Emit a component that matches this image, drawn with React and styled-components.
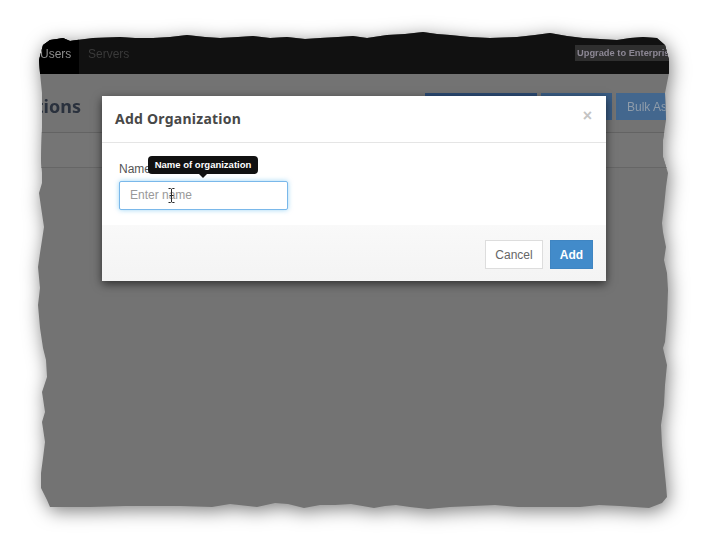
import styled, { createGlobalStyle } from "styled-components";

const GlobalStyle = createGlobalStyle`
    html, body {
        margin: 0;
        padding: 0;
        background: #ffffff;
    }
`;

// torn paper outline, traced clockwise in page coordinates
const tornEdge = [
    [43, 45], [50, 40], [57, 39], [63, 38], [70, 41], [77, 40], [85, 39], [93, 38], [120, 37], [135, 38], [153, 38],
    [170, 37], [187, 35], [205, 37], [220, 38], [238, 37], [253, 36], [270, 38], [287, 37], [305, 39], [320, 38],
    [338, 37], [353, 36], [367, 38], [387, 35], [405, 34], [423, 32], [437, 34], [450, 35], [470, 37], [490, 38],
    [517, 37], [535, 35], [550, 33], [567, 36], [583, 38], [600, 39], [617, 40], [630, 38], [643, 37], [657, 38],
    [665, 45], [669, 60], [669, 73], [665, 93], [666, 120], [663, 140], [663, 157], [668, 173], [666, 187],
    [664, 207], [662, 223], [663, 232], [666, 247], [664, 260], [667, 273], [668, 290], [667, 318], [665, 342],
    [663, 348], [667, 365], [665, 385], [664, 405], [661, 425], [662, 445], [664, 465], [666, 485], [667, 497],
    [662, 503], [649, 508], [620, 506], [599, 505], [580, 507], [563, 507], [518, 507], [495, 505], [473, 506],
    [450, 507], [428, 509], [410, 507], [396, 505], [385, 506], [374, 508], [351, 504], [335, 505], [320, 505],
    [304, 508], [288, 504], [275, 503], [257, 507], [230, 504], [212, 507], [180, 506], [126, 506], [90, 507],
    [50, 507], [47, 500], [41, 488], [41, 473], [43, 458], [45, 442], [42, 422], [45, 412], [42, 392], [47, 377],
    [46, 360], [43, 348], [40, 328], [38, 305], [40, 288], [38, 267], [40, 253], [42, 240], [44, 227], [41, 207],
    [39, 193], [42, 183], [42, 173], [41, 160], [42, 127], [42, 93], [40, 73], [39, 60],
];

const tornPolygon = tornEdge.map(([x, y]) => `${x - 30}px ${y - 28}px`).join(", ");

export default function App() {
    return (
        <Stage>
            <GlobalStyle />
            <Shadow>
                <TornPage>
                    <NavBar>
                        <ActiveTab>Users</ActiveTab>
                        <NavLink>Servers</NavLink>
                        <UpgradeBadge>Upgrade to Enterprise</UpgradeBadge>
                    </NavBar>
                    <Content>
                        <PageHeader>
                            <TitleBox>
                                <PageTitle>Organizations</PageTitle>
                            </TitleBox>
                            <HeaderButtons>
                                <HeaderButton $width={112} $bg="#2b4a72" />
                                <HeaderButton $width={71} $bg="#3a5d85" />
                                <HeaderButton $width={90} $bg="#43678e">Bulk Assign</HeaderButton>
                            </HeaderButtons>
                        </PageHeader>
                        <TableRow />
                    </Content>
                </TornPage>
            </Shadow>
            <Modal>
                <ModalHeader>
                    <ModalTitle>Add Organization</ModalTitle>
                    <CloseMark>×</CloseMark>
                </ModalHeader>
                <ModalBody>
                    <FieldGroup>
                        <FieldLabel>Name</FieldLabel>
                        <NameInput placeholder="Enter name" />
                        <Tooltip>Name of organization</Tooltip>
                        <TextCursor viewBox="0 0 7 15" width="7" height="15">
                            <path d="M.5.500h2l1 .7 1-.7h2M3.500 1v13M.5 14.500h2l1-.7 1 .7h2M1.500 7.500h4" fill="none" stroke="#2a2a2a" strokeWidth="1" />
                        </TextCursor>
                    </FieldGroup>
                </ModalBody>
                <ModalFooter>
                    <CancelButton>Cancel</CancelButton>
                    <AddButton>Add</AddButton>
                </ModalFooter>
            </Modal>
        </Stage>
    );
}

const Stage = styled.div`
    position: relative;
    width: 704px;
    height: 544px;
    overflow: hidden;
    background: #ffffff;
    padding: 28px 0 0 30px;
    box-sizing: border-box;
`;

const Shadow = styled.div`
    width: 640px;
    height: 484px;
    filter: drop-shadow(2px 4px 9px rgba(0, 0, 0, 0.5));
`;

const TornPage = styled.div`
    width: 640px;
    height: 484px;
    overflow: hidden;
    background: #737373;
    clip-path: polygon(${tornPolygon});
`;

const NavBar = styled.div`
    display: flex;
    align-items: flex-end;
    height: 46px;
    background: #111111;
    font-family: "Liberation Sans", Arial, sans-serif;
    font-size: 12px;
`;

const ActiveTab = styled.div`
    display: flex;
    align-items: center;
    flex-shrink: 0;
    height: 46px;
    box-sizing: border-box;
    width: 49px;
    padding: 6px 0 0 10px;
    background: #000000;
    color: #8d8d8d;
`;

const NavLink = styled.div`
    display: flex;
    align-items: center;
    flex-shrink: 0;
    width: 50px;
    height: 46px;
    padding: 6px 0 0 9px;
    box-sizing: border-box;
    color: #3a3a3a;
`;

const UpgradeBadge = styled.div`
    align-self: flex-start;
    margin: 17px 0 0 446px;
    height: 16px;
    line-height: 16px;
    padding: 0 3px 0 2px;
    white-space: nowrap;
    flex-shrink: 0;
    background: #2f2f2f;
    color: #8c8794;
    font-size: 9.3px;
    font-weight: 700;
`;

const Content = styled.div`
    display: flex;
    flex-direction: column;
`;

const PageHeader = styled.div`
    display: flex;
    align-items: flex-start;
    height: 59px;
    box-sizing: border-box;
    border-bottom: 1px solid #636363;
`;

const TitleBox = styled.div`
    display: flex;
    justify-content: flex-end;
    width: 51px;
    flex-shrink: 0;
    margin-top: 20px;
`;

const PageTitle = styled.div`
    font-family: "Noto Sans", sans-serif;
    font-size: 18px;
    line-height: 25px;
    font-weight: 700;
    color: #2a313d;
    flex-shrink: 0;
`;

const HeaderButtons = styled.div`
    display: flex;
    gap: 4px;
    margin: 19px 0 0 344px;
    flex-shrink: 0;
`;

const HeaderButton = styled.div`
    width: ${(props) => props.$width}px;
    height: 27px;
    line-height: 29px;
    padding-left: 11px;
    box-sizing: border-box;
    flex-shrink: 0;
    background: ${(props) => props.$bg};
    color: #8f9caa;
    font-family: "Liberation Sans", Arial, sans-serif;
    font-size: 12px;
    white-space: nowrap;
`;

const TableRow = styled.div`
    height: 35px;
    box-sizing: border-box;
    border-bottom: 1px solid #666666;
    background: #757575;
`;

const Modal = styled.div`
    position: absolute;
    left: 102px;
    top: 96px;
    width: 504px;
    height: 185px;
    display: flex;
    flex-direction: column;
    background: #ffffff;
    box-shadow: 0 3px 9px rgba(0, 0, 0, 0.6);
`;

const ModalHeader = styled.div`
    display: flex;
    align-items: center;
    justify-content: space-between;
    height: 47px;
    box-sizing: border-box;
    padding: 0 13px;
    border-bottom: 1px solid #e5e5e5;
`;

const ModalTitle = styled.div`
    font-family: "Noto Sans", sans-serif;
    font-size: 14px;
    line-height: 18px;
    margin-top: -1px;
    font-weight: 700;
    color: #484848;
    letter-spacing: 0.25px;
`;

const CloseMark = styled.div`
    font-family: "Liberation Sans", Arial, sans-serif;
    font-size: 16px;
    font-weight: 700;
    color: #c4c4c4;
    margin-top: -6px;
    padding-right: 1px;
`;

const ModalBody = styled.div`
    height: 82px;
    box-sizing: border-box;
    padding: 18px 17px 0;
`;

const FieldGroup = styled.div`
    position: relative;
    width: 169px;
    font-family: "Liberation Sans", Arial, sans-serif;
`;

const FieldLabel = styled.div`
    font-size: 12px;
    line-height: 16px;
    color: #555555;
    margin-bottom: 4px;
`;

const NameInput = styled.input`
    display: block;
    width: 169px;
    height: 29px;
    box-sizing: border-box;
    padding: 0 10px 2px;
    border: 1px solid #7ab8ea;
    border-radius: 2px;
    outline: none;
    box-shadow: 0 0 5px rgba(102, 190, 240, 0.65);
    font-family: "Liberation Sans", Arial, sans-serif;
    font-size: 12px;

    &::placeholder {
        color: #999999;
        opacity: 1;
    }
`;

const Tooltip = styled.div`
    position: absolute;
    left: 29px;
    top: -5px;
    width: 110px;
    height: 18px;
    line-height: 18px;
    text-align: center;
    background: #111111;
    border-radius: 4px;
    color: #ffffff;
    font-size: 9.5px;
    font-weight: 700;
    white-space: nowrap;

    &::after {
        content: "";
        position: absolute;
        left: 50%;
        bottom: -4px;
        margin-left: -4px;
        border-left: 4px solid transparent;
        border-right: 4px solid transparent;
        border-top: 4px solid #111111;
    }
`;

const TextCursor = styled.svg`
    position: absolute;
    left: 49px;
    top: 27px;
`;

const ModalFooter = styled.div`
    flex: 1;
    display: flex;
    justify-content: flex-end;
    gap: 7px;
    padding: 15px 13px 0 0;
    background: linear-gradient(#f9f9f9, #f4f4f4);
`;

const CancelButton = styled.button`
    width: 58px;
    height: 29px;
    box-sizing: border-box;
    padding: 0;
    background: #ffffff;
    border: 1px solid #dddddd;
    color: #666666;
    font-family: "Liberation Sans", Arial, sans-serif;
    font-size: 12px;
`;

const AddButton = styled.button`
    width: 43px;
    height: 29px;
    box-sizing: border-box;
    padding: 0;
    background: #428bca;
    border: 1px solid #3f85c2;
    color: #ffffff;
    font-family: "Liberation Sans", Arial, sans-serif;
    font-size: 12px;
    font-weight: 700;
`;
